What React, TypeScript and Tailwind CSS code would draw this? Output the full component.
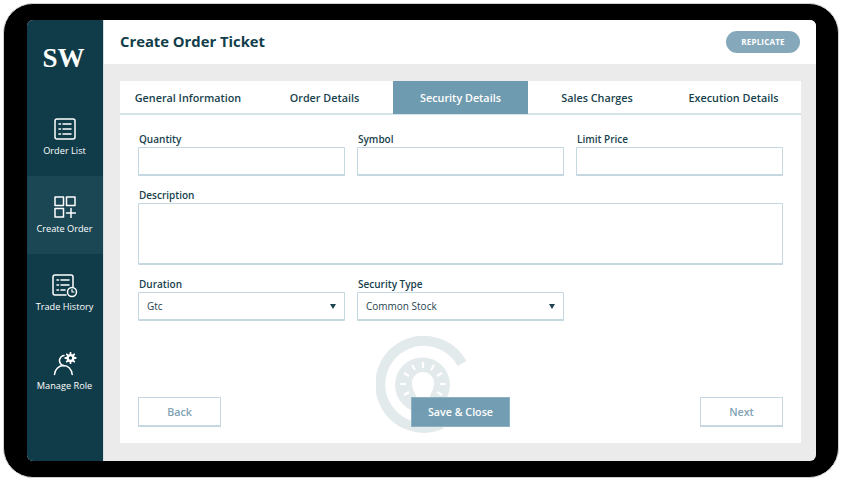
import React from "react";

const I = { fill: "none", stroke: "currentColor", strokeWidth: 1.5, strokeLinecap: "round" as const, strokeLinejoin: "round" as const };

function ListIcon() {
  return (
    <svg width="22" height="22" viewBox="0 0 22 22" {...I}>
      <rect x="1" y="1" width="20" height="20" rx="2" />
      <path d="M5 6h1.5M9 6h8M5 11h1.5M9 11h8M5 16h1.5M9 16h8" />
    </svg>
  );
}
function GridPlusIcon() {
  return (
    <svg width="22" height="22" viewBox="0 0 22 22" {...I}>
      <rect x="1" y="1" width="8.5" height="8.5" />
      <rect x="12.5" y="1" width="8.5" height="8.5" />
      <rect x="1" y="12.5" width="8.5" height="8.5" />
      <path d="M12.5 17h9M17 12.5v9" />
    </svg>
  );
}
function HistoryIcon() {
  return (
    <svg width="26" height="24" viewBox="0 0 26 24" {...I}>
      <path d="M14 21H3a2 2 0 0 1-2-2V3a2 2 0 0 1 2-2h16a2 2 0 0 1 2 2v10" />
      <path d="M5 6h1.5M9 6h8M5 11h1.5M9 11h8M5 16h1.5M9 16h4" />
      <circle cx="20" cy="18" r="4.5" />
      <path d="M20 15.5V18h2" strokeWidth="1.2" />
    </svg>
  );
}
function RoleIcon() {
  return (
    <svg width="24" height="24" viewBox="0 0 24 24" {...I}>
      <path d="M11 3.6a5.6 5.6 0 0 0-3.2 1.6 5.2 5.2 0 0 0 3.3 8.6" />
      <path d="M1.5 22.5c.4-5 4-8.7 8.7-8.9 5-.2 8.5 3.6 9 8.9" />
      <circle cx="17.5" cy="6" r="2.9" strokeWidth="2.4" />
      <path d="M17.5 0.8v1.4M17.5 9.8v1.4M12.3 6h1.4M21.3 6h1.4M13.8 2.3l1 1M20.2 8.7l1 1M13.8 9.7l1-1M20.2 3.3l1-1" strokeWidth="1.8" />
    </svg>
  );
}

function NavItem({ icon, label, active, labelClass = "mt-[1px]" }: { icon: React.ReactNode; label: string; active?: boolean; labelClass?: string }) {
  return (
    <div className={`h-[78px] flex flex-col items-center pt-[20px] pr-[1px] text-white ${active ? "bg-[#1b4755]" : ""}`}>
      <div className="h-[24px] flex items-start justify-center">{icon}</div>
      <div className={`${labelClass} text-[9.2px] leading-[16px] font-normal`}>{label}</div>
    </div>
  );
}

function Field({ label, w, h = "h-[29px]", children }: { label: string; w: string; h?: string; children?: React.ReactNode }) {
  return (
    <div className={w}>
      <div className="text-[10px] leading-[14px] font-semibold text-[#173f4c] mb-[1px] pl-[1px]">{label}</div>
      <div className={`${h} border border-[#c5d8e2] border-b-2 rounded-[1px] bg-white flex items-center justify-between pl-[8px] pr-[8px] text-[10px] text-[#29434e]`}>
        {children}
      </div>
    </div>
  );
}

function Caret() {
  return <span className="w-0 h-0 border-l-[3.5px] border-r-[3.5px] border-t-[5px] border-l-transparent border-r-transparent border-t-[#1d4350]" />;
}

const tabs = [
  { t: "General Information", w: "w-[136px]" },
  { t: "Order Details", w: "w-[137px]" },
  { t: "Security Details", w: "w-[135px]" },
  { t: "Sales Charges", w: "w-[138px]" },
  { t: "Execution Details", w: "w-[135px]" },
];

export default function App() {
  return (
    <div className="w-[843px] h-[481px] bg-white pt-[3px] pl-[3px] overflow-hidden" style={{ fontFamily: '"Open Sans", sans-serif' }}>
      <div className="w-[836px] h-[475px] bg-black border border-[#d0d0d0] rounded-[30px] pt-[16px] pl-[23px]">
        <div className="w-[789px] h-[441px] flex rounded-[6px] overflow-hidden bg-[#ebebeb]">
          <aside className="w-[76px] shrink-0 bg-[#103c4a]">
            <div className="h-[78px] flex items-center justify-center text-white text-[27px] font-bold" style={{ fontFamily: '"Liberation Serif", serif' }}>
              <span className="mt-[-2px] mr-[3px]">SW</span>
            </div>
            <NavItem icon={<ListIcon />} label="Order List" />
            <NavItem icon={<GridPlusIcon />} label="Create Order" active />
            <NavItem icon={<HistoryIcon />} label="Trade History" />
            <NavItem icon={<RoleIcon />} label="Manage Role" labelClass="mt-[2px]" />
          </aside>
          <main className="flex-1 border-l border-[#d5dfe3] flex flex-col">
            <header className="h-[44px] bg-white flex items-center justify-between pl-[16px] pr-[16px] shrink-0">
              <h1 className="text-[14.8px] font-bold text-[#123e4b] mt-[-2px]">Create Order Ticket</h1>
              <button className="w-[74px] h-[22px] rounded-full bg-[#85a9bb] text-white text-[8px] font-bold tracking-[0.2px]">REPLICATE</button>
            </header>
            <div className="flex-1 pt-[17px] pl-[16px] pr-[15px] pb-[18px]">
              <div className="relative h-full bg-white flex flex-col">
                <div className="h-[34px] flex border-b-2 border-[#d5e3ea] shrink-0">
                  {tabs.map((x, i) => (
                    <div key={x.t} className={`${x.w} flex items-center justify-center pt-[2px] text-[10.8px] font-semibold h-[33px] ${i === 2 ? "bg-[#6f9bb0] text-white" : "text-[#173f4c]"}`}>
                      {x.t}
                    </div>
                  ))}
                </div>
                <svg className="absolute left-[256px] top-[254px] text-[#e3eaec]" width="100" height="100" viewBox="0 0 100 100" fill="none">
                  <path d="M86 28.5A43.5 43.5 0 1 0 65.5 89" stroke="currentColor" strokeWidth="10" />
                  <circle cx="46.5" cy="50" r="27.5" fill="currentColor" />
                  <path d="M41 66c0-6-5-10-5-18a11 11 0 0 1 22 0c0 8-5 12-5 18z" fill="#fff" />
                  <path d="M47 27v6M36 30l3 5M58 30l-3 5M28 38l5 3M66 38l-5 3M24 49h6M70 49h-6M28 60l5-3M66 60l-5-3" stroke="#fff" strokeWidth="2.2" />
                </svg>
                <div className="relative flex-1 flex flex-col pt-[17px] pl-[18px] pr-[18px] pb-[16px]">
                  <div className="flex gap-[12px]">
                    <Field label="Quantity" w="w-[207px]" />
                    <Field label="Symbol" w="w-[207px]" />
                    <Field label="Limit Price" w="w-[207px]" />
                  </div>
                  <div className="mt-[12px]">
                    <Field label="Description" w="w-full" h="h-[62px]" />
                  </div>
                  <div className="flex gap-[12px] mt-[12px]">
                    <Field label="Duration" w="w-[207px]">
                      <span>Gtc</span>
                      <Caret />
                    </Field>
                    <Field label="Security Type" w="w-[207px]">
                      <span>Common Stock</span>
                      <Caret />
                    </Field>
                  </div>
                  <div className="mt-auto flex justify-between">
                    <button className="w-[83px] h-[30px] pt-[1px] border border-[#c5d8e2] border-b-2 text-[10.7px] font-semibold text-[#7fa3b5]">Back</button>
                    <button className="w-[99px] h-[30px] pt-[1px] bg-[#6a98ae]/95 border border-[#8fb0c1] text-[10.7px] font-semibold text-white">Save &amp; Close</button>
                    <button className="w-[83px] h-[30px] pt-[1px] border border-[#c5d8e2] border-b-2 text-[10.7px] font-semibold text-[#7fa3b5]">Next</button>
                  </div>
                </div>
              </div>
            </div>
          </main>
        </div>
      </div>
    </div>
  );
}
